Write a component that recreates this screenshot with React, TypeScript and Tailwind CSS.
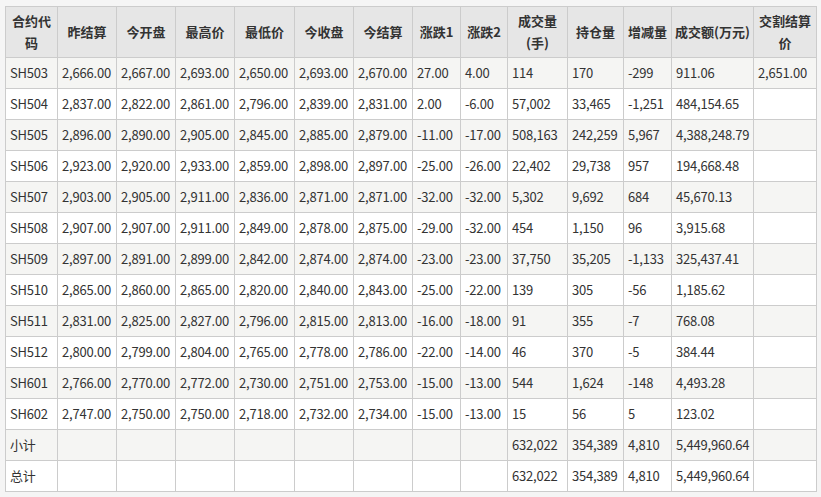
const widths = [52, 59, 59, 59, 60, 59, 59, 48, 47, 60, 56, 48, 82, 63];
const head = ["合约代码", "昨结算", "今开盘", "最高价", "最低价", "今收盘", "今结算", "涨跌1", "涨跌2", "成交量(手)", "持仓量", "增减量", "成交额(万元)", "交割结算价"];
const rows: string[][] = [
  ["SH503","2,666.00","2,667.00","2,693.00","2,650.00","2,693.00","2,670.00","27.00","4.00","114","170","-299","911.06","2,651.00"],
  ["SH504","2,837.00","2,822.00","2,861.00","2,796.00","2,839.00","2,831.00","2.00","-6.00","57,002","33,465","-1,251","484,154.65",""],
  ["SH505","2,896.00","2,890.00","2,905.00","2,845.00","2,885.00","2,879.00","-11.00","-17.00","508,163","242,259","5,967","4,388,248.79",""],
  ["SH506","2,923.00","2,920.00","2,933.00","2,859.00","2,898.00","2,897.00","-25.00","-26.00","22,402","29,738","957","194,668.48",""],
  ["SH507","2,903.00","2,905.00","2,911.00","2,836.00","2,871.00","2,871.00","-32.00","-32.00","5,302","9,692","684","45,670.13",""],
  ["SH508","2,907.00","2,907.00","2,911.00","2,849.00","2,878.00","2,875.00","-29.00","-32.00","454","1,150","96","3,915.68",""],
  ["SH509","2,897.00","2,891.00","2,899.00","2,842.00","2,874.00","2,874.00","-23.00","-23.00","37,750","35,205","-1,133","325,437.41",""],
  ["SH510","2,865.00","2,860.00","2,865.00","2,820.00","2,840.00","2,843.00","-25.00","-22.00","139","305","-56","1,185.62",""],
  ["SH511","2,831.00","2,825.00","2,827.00","2,796.00","2,815.00","2,813.00","-16.00","-18.00","91","355","-7","768.08",""],
  ["SH512","2,800.00","2,799.00","2,804.00","2,765.00","2,778.00","2,786.00","-22.00","-14.00","46","370","-5","384.44",""],
  ["SH601","2,766.00","2,770.00","2,772.00","2,730.00","2,751.00","2,753.00","-15.00","-13.00","544","1,624","-148","4,493.28",""],
  ["SH602","2,747.00","2,750.00","2,750.00","2,718.00","2,732.00","2,734.00","-15.00","-13.00","15","56","5","123.02",""],
  ["小计","","","","","","","","","632,022","354,389","4,810","5,449,960.64",""],
  ["总计","","","","","","","","","632,022","354,389","4,810","5,449,960.64",""],
];
export default function App() {
  return (
    <div className="w-[821px] h-[497px] bg-[#f5f5f5] pt-[6px] pl-[5px] overflow-hidden" style={{ fontFamily: '"Noto Sans CJK SC", "Noto Sans", sans-serif' }}>
      <table className="table-fixed border-collapse text-[13px] text-[#333] bg-white" style={{ width: 811 }}>
        <colgroup>{widths.map((w, i) => <col key={i} style={{ width: w }} />)}</colgroup>
        <thead>
          <tr className="h-[51px] bg-[#e6e6e6]">
            {head.map((h, i) => (
              <th key={i} className="border border-[#cccccc] px-[3px] font-bold text-center leading-[22px]">{h}</th>
            ))}
          </tr>
        </thead>
        <tbody>
          {rows.map((r, ri) => (
            <tr key={ri} className={`h-[31px] ${ri % 2 === 0 ? "bg-[#f5f5f3]" : "bg-white"}`}>
              {r.map((c, ci) => (
                <td key={ci} className="border border-[#cccccc] px-[4px] whitespace-nowrap overflow-hidden tracking-[-0.2px]">{c}</td>
              ))}
            </tr>
          ))}
        </tbody>
      </table>
    </div>
  );
}
